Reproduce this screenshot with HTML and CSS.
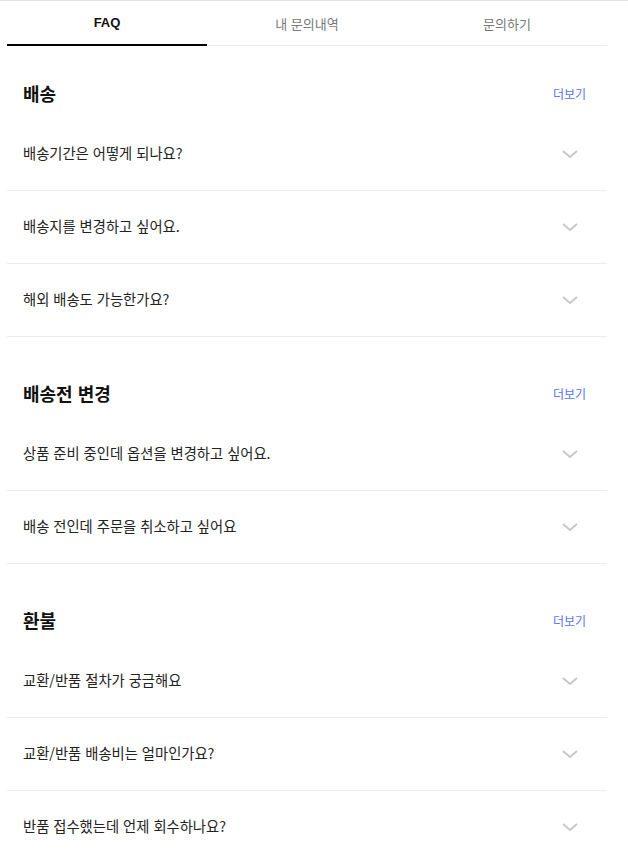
FILE: index.html
```html
<!DOCTYPE html>
<html lang="ko">
<head>
<meta charset="utf-8">
<link rel="stylesheet" href="styles.css">
</head>
<body>
<div class="page">
  <nav class="tabs">
    <a class="tab active">FAQ</a>
    <a class="tab">내 문의내역</a>
    <a class="tab">문의하기</a>
  </nav>

  <section class="faq-section first">
    <div class="sec-head"><h2>배송</h2><a class="more">더보기</a></div>
    <ul class="items">
      <li class="item"><span>배송기간은 어떻게 되나요?</span><svg class="chev" viewBox="0 0 16 8"><path d="M1 1l7 6 7-6"/></svg></li>
      <li class="item"><span>배송지를 변경하고 싶어요.</span><svg class="chev" viewBox="0 0 16 8"><path d="M1 1l7 6 7-6"/></svg></li>
      <li class="item"><span>해외 배송도 가능한가요?</span><svg class="chev" viewBox="0 0 16 8"><path d="M1 1l7 6 7-6"/></svg></li>
    </ul>
  </section>

  <section class="faq-section">
    <div class="sec-head"><h2>배송전 변경</h2><a class="more">더보기</a></div>
    <ul class="items">
      <li class="item"><span>상품 준비 중인데 옵션을 변경하고 싶어요.</span><svg class="chev" viewBox="0 0 16 8"><path d="M1 1l7 6 7-6"/></svg></li>
      <li class="item"><span>배송 전인데 주문을 취소하고 싶어요</span><svg class="chev" viewBox="0 0 16 8"><path d="M1 1l7 6 7-6"/></svg></li>
    </ul>
  </section>

  <section class="faq-section">
    <div class="sec-head"><h2>환불</h2><a class="more">더보기</a></div>
    <ul class="items">
      <li class="item"><span>교환/반품 절차가 궁금해요</span><svg class="chev" viewBox="0 0 16 8"><path d="M1 1l7 6 7-6"/></svg></li>
      <li class="item"><span>교환/반품 배송비는 얼마인가요?</span><svg class="chev" viewBox="0 0 16 8"><path d="M1 1l7 6 7-6"/></svg></li>
      <li class="item"><span>반품 접수했는데 언제 회수하나요?</span><svg class="chev" viewBox="0 0 16 8"><path d="M1 1l7 6 7-6"/></svg></li>
    </ul>
  </section>
</div>
</body>
</html>
```

FILE: styles.css
```css
* { box-sizing: border-box; }
html, body { margin: 0; padding: 0; background: #fff; }
body {
  border-top: 1px solid #e2e2e2;
  font-family: "Noto Sans CJK KR", "Noto Sans", sans-serif;
  color: #222;
}
.page { width: 600px; margin-left: 7px; }
.tabs {
  display: grid;
  grid-template-columns: repeat(3, 1fr);
  border-bottom: 1px solid #ececec;
  height: 45px;
}
.tab {
  display: flex;
  align-items: center;
  justify-content: center;
  font-size: 13px;
  color: #777;
  height: 45px;
  margin-bottom: -1px;
}
.tab.active {
  color: #111;
  font-weight: 700;
  font-family: "Liberation Sans", "Noto Sans CJK KR", sans-serif;
  border-bottom: 2px solid #000;
}
.faq-section { padding-top: 34px; }
.faq-section.first { padding-top: 25px; }
.sec-head {
  height: 47px;
  display: flex;
  align-items: center;
  justify-content: space-between;
  padding: 0 21px 0 16px;
}
.sec-head h2 {
  margin: 0 0 3px;
  font-size: 18px;
  font-weight: 700;
  color: #111;
}
.more { font-size: 12px; color: #5b73f5; margin-bottom: 2px; }
.items { list-style: none; margin: 0; padding: 0; }
.item {
  height: 73px;
  border-bottom: 1px solid #ececec;
  display: flex;
  align-items: center;
  justify-content: space-between;
  padding: 0 29px 0 16px;
  font-size: 14.3px;
  color: #222;
}
.item span { margin-bottom: 3px; }
.chev { width: 16px; height: 8px; }
.chev path { fill: none; stroke: #c8c8c8; stroke-width: 2; }
```
